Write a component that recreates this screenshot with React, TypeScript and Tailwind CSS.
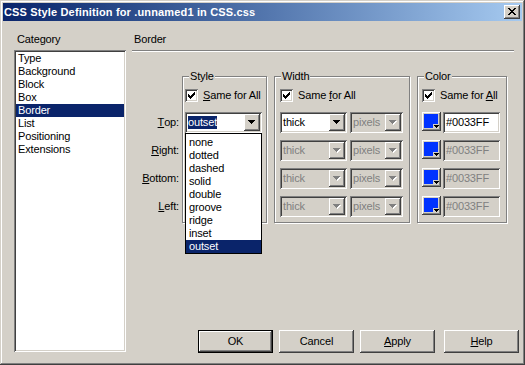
import React from "react";

const raised =
  "shadow-[inset_-1px_-1px_0_#404040,inset_1px_1px_0_#ffffff,inset_-2px_-2px_0_#808080,inset_2px_2px_0_#d4d0c8]";
const sunken =
  "shadow-[inset_1px_1px_0_#808080,inset_-1px_-1px_0_#ffffff,inset_2px_2px_0_#404040,inset_-2px_-2px_0_#d4d0c8]";

function Arrow({ disabled }: { disabled?: boolean }) {
  const rows = [
    [0, 7],
    [1, 5],
    [2, 3],
    [3, 1],
  ];
  return (
    <svg width="8" height="5" shapeRendering="crispEdges">
      {disabled &&
        rows.map(([x, w], i) => (
          <rect key={"s" + i} x={x + 1} y={i + 1} width={w} height={1} fill="#ffffff" />
        ))}
      {rows.map(([x, w], i) => (
        <rect key={i} x={x} y={i} width={w} height={1} fill={disabled ? "#808080" : "#000000"} />
      ))}
    </svg>
  );
}

function Combo({
  wClass,
  text,
  disabled,
  selected,
}: {
  wClass: string;
  text: string;
  disabled?: boolean;
  selected?: boolean;
}) {
  return (
    <div
      className={`flex h-[21px] p-[2px] ${sunken} ${wClass} ${disabled ? "bg-[#d4d0c8]" : "bg-white"}`}
    >
      <div className="flex flex-1 items-center overflow-hidden pl-[1px]">
        <span
          className={
            selected
              ? "bg-[#0a246a] text-white"
              : disabled
              ? "text-[#808080]"
              : "text-black"
          }
        >
          {text}
        </span>
      </div>
      <div className={`flex h-[17px] w-[16px] items-center justify-center bg-[#d4d0c8] ${raised}`}>
        <Arrow disabled={disabled} />
      </div>
    </div>
  );
}

function Check() {
  const cols = [2, 3, 4, 3, 2, 1, 0];
  return (
    <div className={`relative h-[13px] w-[13px] shrink-0 bg-white ${sunken}`}>
      <svg className="absolute left-[3px] top-[3px]" width="7" height="7" shapeRendering="crispEdges">
        {cols.map((y, x) => (
          <rect key={x} x={x} y={y} width={1} height={3} fill="#000000" />
        ))}
      </svg>
    </div>
  );
}

function Group({
  title,
  className,
  children,
}: {
  title: string;
  className: string;
  children: React.ReactNode;
}) {
  return (
    <div
      className={`relative h-[147px] border border-[#808080] shadow-[1px_1px_0_#ffffff,inset_1px_1px_0_#ffffff] ${className}`}
    >
      <span className="absolute left-[6px] top-[-7px] bg-[#d4d0c8] px-[1px] leading-[13px]">
        {title}
      </span>
      {children}
    </div>
  );
}

function SameForAll({ u }: { u: "S" | "f" | "A" }) {
  return (
    <div className="flex h-[13px] items-center">
      <Check />
      <span className="ml-[5px] whitespace-nowrap">
        {u === "S" ? (
          <>
            <span className="underline underline-offset-[1px]">S</span>ame for All
          </>
        ) : u === "f" ? (
          <>
            Same <span className="underline underline-offset-[1px]">f</span>or All
          </>
        ) : (
          <>
            Same for <span className="underline underline-offset-[1px]">A</span>ll
          </>
        )}
      </span>
    </div>
  );
}

function Swatch() {
  return (
    <div className={`relative h-[19px] w-[19px] shrink-0 bg-[#d4d0c8] ${raised}`}>
      <div className="absolute left-[2px] top-[2px] h-[14px] w-[14px] bg-[#0033ff]" />
      <div className="absolute left-[11px] top-[12px] flex h-[4px] w-[6px] items-end justify-center bg-[#d4d0c8]">
        <svg width="5" height="3" shapeRendering="crispEdges">
          <rect x="0" y="0" width="5" height="1" fill="#000" />
          <rect x="1" y="1" width="3" height="1" fill="#000" />
          <rect x="2" y="2" width="1" height="1" fill="#000" />
        </svg>
      </div>
    </div>
  );
}

function ColorInput({ disabled }: { disabled?: boolean }) {
  return (
    <div
      className={`flex h-[21px] w-[57px] items-center p-[2px] pl-[3px] ${sunken} ${
        disabled ? "bg-[#d4d0c8] text-[#808080]" : "bg-white text-black"
      }`}
    >
      #0033FF
    </div>
  );
}

function Btn({
  children,
  def,
  className,
}: {
  children: React.ReactNode;
  def?: boolean;
  className?: string;
}) {
  return (
    <div
      className={`flex h-[23px] w-[75px] items-center justify-center bg-[#d4d0c8] ${
        def
          ? "border border-black shadow-[inset_-1px_-1px_0_#404040,inset_1px_1px_0_#ffffff,inset_-2px_-2px_0_#808080,inset_2px_2px_0_#d4d0c8]"
          : raised
      } ${className ?? ""}`}
    >
      {children}
    </div>
  );
}

const U = ({ c }: { c: string }) => <span className="underline underline-offset-[1px]">{c}</span>;

export default function App() {
  const cats = ["Type", "Background", "Block", "Box", "Border", "List", "Positioning", "Extensions"];
  const styles = ["none", "dotted", "dashed", "solid", "double", "groove", "ridge", "inset", "outset"];
  return (
    <div className="relative h-[365px] w-[525px] overflow-hidden bg-[#d4d0c8] px-[3px] pt-[3px] font-[Liberation_Sans,Arial,sans-serif] text-[11px] leading-[13px] tracking-[-0.15px] text-black shadow-[inset_-1px_-1px_0_#404040,inset_1px_1px_0_#d4d0c8,inset_-2px_-2px_0_#808080,inset_2px_2px_0_#ffffff]">
      {/* Title bar */}
      <div className="flex h-[18px] items-center bg-linear-to-r from-[#0a246a] to-[#a6caf0] pl-[1px] pr-[2px]">
        <span className="flex-1 whitespace-nowrap font-bold tracking-[0.15px] text-white">
          CSS Style Definition for .unnamed1 in CSS.css
        </span>
        <div className={`flex h-[14px] w-[16px] items-center justify-center bg-[#d4d0c8] ${raised}`}>
          <svg width="8" height="7" shapeRendering="crispEdges" className="mt-[-1px]">
            <rect x="0" y="0" width="2" height="1" />
            <rect x="6" y="0" width="2" height="1" />
            <rect x="1" y="1" width="2" height="1" />
            <rect x="5" y="1" width="2" height="1" />
            <rect x="2" y="2" width="4" height="1" />
            <rect x="3" y="3" width="2" height="1" />
            <rect x="2" y="4" width="4" height="1" />
            <rect x="1" y="5" width="2" height="1" />
            <rect x="5" y="5" width="2" height="1" />
            <rect x="0" y="6" width="2" height="1" />
            <rect x="6" y="6" width="2" height="1" />
          </svg>
        </div>
      </div>

      <div className="flex">
        {/* Left column */}
        <div className="ml-[11px] mt-[12px] w-[112px]">
          <div className="h-[13px] pl-[3px]">Category</div>
          <div className={`mt-[4px] h-[302px] bg-white px-[2px] pt-[2px] ${sunken}`}>
            {cats.map((c) => (
              <div
                key={c}
                className={`h-[13px] pl-[2px] ${c === "Border" ? "bg-[#0a246a] text-white" : ""}`}
              >
                {c}
              </div>
            ))}
          </div>
        </div>

        {/* Right column */}
        <div className="ml-[6px] mt-[12px]">
          <div className="h-[13px] pl-[2px]">Border</div>
          <div className="mt-[4px] h-[2px] w-[382px] border-b border-t border-b-white border-t-[#808080]" />

          <div className="mt-[24px] flex">
            <div className="flex w-[48px] flex-col items-end gap-[7px] pr-[1px] pt-[36px]">
              <div className="flex h-[21px] items-center">
                <U c="T" />
                op:
              </div>
              <div className="flex h-[21px] items-center">
                <U c="R" />
                ight:
              </div>
              <div className="flex h-[21px] items-center">
                <U c="B" />
                ottom:
              </div>
              <div className="flex h-[21px] items-center">
                <U c="L" />
                eft:
              </div>
            </div>

            <Group title="Style" className="ml-[2px] w-[85px] pl-[2px] pt-[12px]">
              <SameForAll u="S" />
              <div className="mt-[10px] flex flex-col gap-[7px]">
                <Combo wClass="w-[77px]" text="outset" selected />
                <Combo wClass="w-[77px]" text="" disabled />
                <Combo wClass="w-[77px]" text="" disabled />
                <Combo wClass="w-[77px]" text="" disabled />
              </div>
            </Group>

            <Group title="Width" className="ml-[7px] w-[136px] pl-[5px] pt-[12px]">
              <SameForAll u="f" />
              <div className="mt-[10px] flex flex-col gap-[7px]">
                {[0, 1, 2, 3].map((i) => (
                  <div key={i} className="flex gap-[3px]">
                    <Combo wClass="w-[67px]" text="thick" disabled={i > 0} />
                    <Combo wClass="w-[53px]" text="pixels" disabled />
                  </div>
                ))}
              </div>
            </Group>

            <Group title="Color" className="ml-[7px] w-[90px] pl-[4px] pt-[12px]">
              <SameForAll u="A" />
              <div className="mt-[10px] flex flex-col gap-[7px]">
                {[0, 1, 2, 3].map((i) => (
                  <div key={i} className="flex gap-[2px]">
                    <Swatch />
                    <ColorInput disabled={i > 0} />
                  </div>
                ))}
              </div>
            </Group>
          </div>

          <div className="ml-[66px] mt-[107px] flex">
            <Btn def>OK</Btn>
            <Btn className="ml-[6px]">Cancel</Btn>
            <Btn className="ml-[6px]">
              <U c="A" />
              pply
            </Btn>
            <Btn className="ml-[9px]">
              <U c="H" />
              elp
            </Btn>
          </div>
        </div>
      </div>

      {/* Open dropdown list */}
      <div className="absolute left-[185px] top-[133px] h-[121px] w-[77px] border border-black bg-white pt-[2px]">
        {styles.map((s) => (
          <div
            key={s}
            className={`h-[13px] pl-[3px] ${s === "outset" ? "bg-[#0a246a] text-white" : ""}`}
          >
            {s}
          </div>
        ))}
      </div>
    </div>
  );
}
